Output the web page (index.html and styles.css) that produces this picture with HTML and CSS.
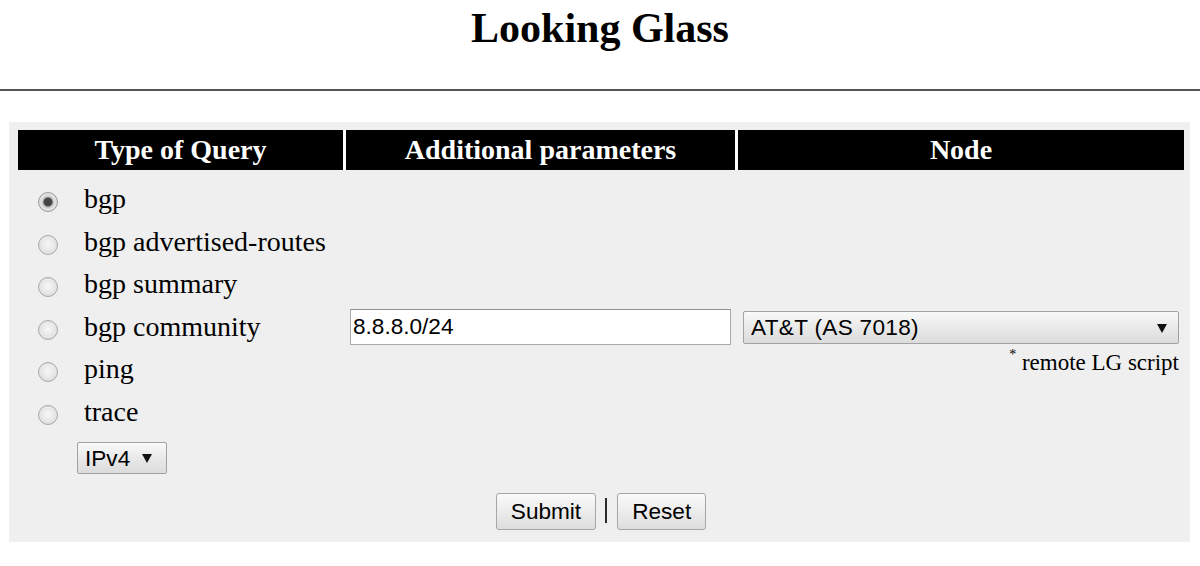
FILE: index.html
```html
<!DOCTYPE html>
<html lang="en">
<head>
<meta charset="utf-8">
<title>Looking Glass</title>
<link rel="stylesheet" href="styles.css">
</head>
<body>
<h1 class="title">Looking Glass</h1>
<div class="rule"></div>
<form class="panel">
  <div class="head">
    <div class="head-cell">Type of Query</div>
    <div class="head-cell">Additional parameters</div>
    <div class="head-cell">Node</div>
  </div>
  <div class="body">
    <div class="queries">
      <label class="query"><input type="radio" name="query" class="radio" checked><span class="query-text">bgp</span></label>
      <label class="query"><input type="radio" name="query" class="radio"><span class="query-text">bgp advertised-routes</span></label>
      <label class="query"><input type="radio" name="query" class="radio"><span class="query-text">bgp summary</span></label>
      <label class="query"><input type="radio" name="query" class="radio"><span class="query-text">bgp community</span></label>
      <label class="query"><input type="radio" name="query" class="radio"><span class="query-text">ping</span></label>
      <label class="query"><input type="radio" name="query" class="radio"><span class="query-text">trace</span></label>
      <div class="select-wrap proto-wrap">
        <select class="select proto"><option>IPv4</option><option>IPv6</option></select>
        <span class="arrow"></span>
      </div>
    </div>
    <div class="params">
      <input type="text" class="addr" value="8.8.8.0/24">
    </div>
    <div class="node">
      <div class="select-wrap node-wrap">
        <select class="select node-select"><option>AT&amp;T (AS 7018)</option></select>
        <span class="arrow"></span>
      </div>
      <div class="note"><sup class="star">*</sup> remote LG script</div>
    </div>
  </div>
  <div class="actions">
    <button type="submit" class="btn">Submit</button>
    <span class="sep"></span>
    <button type="reset" class="btn">Reset</button>
  </div>
</form>
</body>
</html>
```

FILE: styles.css
```css
html, body {
  margin: 0;
  padding: 0;
  background: #ffffff;
  color: #000;
  font-family: "Liberation Serif", "Times New Roman", serif;
}

.title {
  margin: 0;
  padding-top: 4px;
  font-size: 42px;
  line-height: 48px;
  font-weight: bold;
  text-align: center;
}

.rule {
  margin-top: 37px;
  height: 2px;
  background: #555;
}

.panel {
  margin: 31px 10px 0 9px;
  padding: 8px 6px 12px 9px;
  background: #efefef;
}

.head {
  display: grid;
  grid-template-columns: 325px 389px 446px;
  column-gap: 3px;
  background: #fff;
}

.head-cell {
  background: #000;
  color: #fff;
  height: 40px;
  line-height: 40px;
  font-size: 28px;
  font-weight: bold;
  text-align: center;
}

.body {
  display: grid;
  grid-template-columns: 325px 389px 446px;
  column-gap: 3px;
  align-items: start;
}

.queries {
  padding-top: 11px;
}

.query {
  display: flex;
  align-items: center;
  height: 42.5px;
  padding-left: 20px;
  font-size: 28px;
}

.query-text {
  line-height: 1;
  padding-bottom: 6px;
}

.radio {
  appearance: none;
  -webkit-appearance: none;
  margin: 0 26px 0 0;
  width: 20px;
  height: 20px;
  border-radius: 50%;
  border: 1px solid #a9a9a9;
  background: radial-gradient(circle at 50% 45%, #f7f7f7 0, #e6e6e6 55%, #d2d2d2 100%);
  flex: none;
}

.radio:checked {
  border-color: #9c9c9c;
  background: radial-gradient(circle at 50% 50%, #3f3f3f 0, #4a4a4a 4px, #bdbdbd 5px, #e4e4e4 7px, #d0d0d0 100%);
}

.select-wrap {
  position: relative;
}

.select {
  appearance: none;
  -webkit-appearance: none;
  display: block;
  margin: 0;
  border: 1px solid #a2a2a2;
  border-radius: 2px;
  background: linear-gradient(#f9f9f9, #e9e9e9 50%, #dcdcdc);
  color: #000;
  font-family: "Liberation Sans", Arial, sans-serif;
  font-size: 22.6px;
}

.arrow {
  position: absolute;
  top: 50%;
  margin-top: -4px;
  width: 0;
  height: 0;
  border-left: 5px solid transparent;
  border-right: 5px solid transparent;
  border-top: 9px solid #111;
  pointer-events: none;
}

.proto-wrap {
  margin: 6px 0 0 59px;
  width: 90px;
}

.proto {
  width: 90px;
  height: 32px;
  padding: 0 0 0 7px;
}

.proto-wrap .arrow {
  right: 15px;
}

.params {
  margin-top: 139px;
}

.addr {
  display: block;
  box-sizing: border-box;
  margin: 0 0 0 4px;
  width: 381px;
  height: 36px;
  padding: 0 2px;
  border: 1px solid #a9a9a9;
  border-top-color: #8f8f8f;
  background: #fff;
  color: #000;
  font-family: "Liberation Sans", Arial, sans-serif;
  font-size: 22.6px;
}

.node {
  margin-top: 141px;
}

.node-wrap {
  margin-left: 5px;
  width: 436px;
}

.node-select {
  width: 436px;
  height: 33px;
  padding: 0 0 0 7px;
  letter-spacing: 0.3px;
}

.node-wrap .arrow {
  right: 12px;
}

.note {
  margin-top: 6px;
  padding-right: 5px;
  text-align: right;
  font-size: 23px;
  line-height: 26px;
}

.star {
  color: #000;
  font-size: 14px;
  vertical-align: 11px;
  line-height: 0;
}

.actions {
  display: flex;
  justify-content: center;
  align-items: center;
  margin-top: 19px;
}

.btn {
  box-sizing: border-box;
  margin: 0;
  height: 37px;
  padding: 0 14px;
  border: 1px solid #a6a6a6;
  border-radius: 3px;
  background: linear-gradient(#fafafa, #ececec 50%, #dddddd);
  color: #000;
  font-family: "Liberation Sans", Arial, sans-serif;
  font-size: 22.6px;
}

.sep {
  width: 0;
  height: 25px;
  margin: -3px 10px 0 9px;
  border-left: 2px solid #2a2a2a;
}
```
